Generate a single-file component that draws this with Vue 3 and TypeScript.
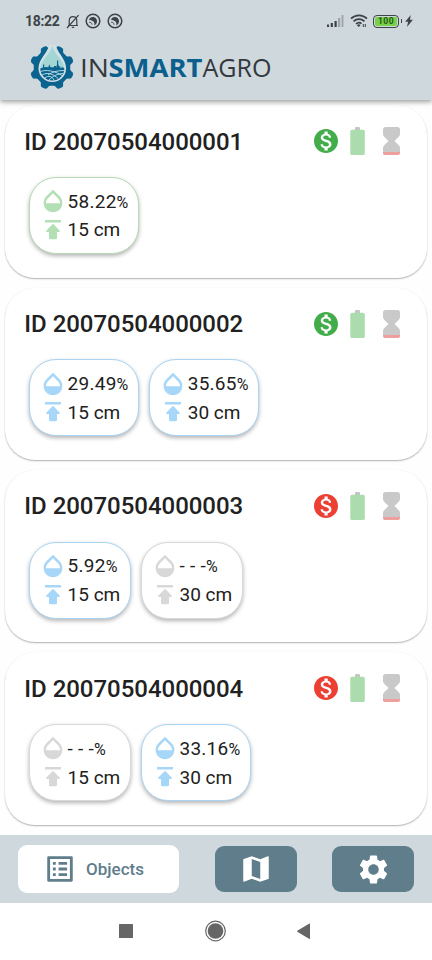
<script setup lang="ts">
type Tone = 'green' | 'blue' | 'grey'

interface Reading {
  moisture: string
  depth: number
  tone: Tone
}

interface Probe {
  id: string
  paid: boolean
  readings: Reading[]
}

const probes: Probe[] = [
  { id: '20070504000001', paid: true, readings: [{ moisture: '58.22', depth: 15, tone: 'green' }] },
  {
    id: '20070504000002',
    paid: true,
    readings: [
      { moisture: '29.49', depth: 15, tone: 'blue' },
      { moisture: '35.65', depth: 30, tone: 'blue' },
    ],
  },
  {
    id: '20070504000003',
    paid: false,
    readings: [
      { moisture: '5.92', depth: 15, tone: 'blue' },
      { moisture: '- - -', depth: 30, tone: 'grey' },
    ],
  },
  {
    id: '20070504000004',
    paid: false,
    readings: [
      { moisture: '- - -', depth: 15, tone: 'grey' },
      { moisture: '33.16', depth: 30, tone: 'blue' },
    ],
  },
]

const teeth = [22.5, 67.5, 112.5, 157.5, 202.5, 247.5, 292.5, 337.5]
</script>

<template>
  <div class="screen">
    <header class="header">
      <div class="status">
        <span class="clock">18:22</span>
        <svg class="bell" viewBox="0 0 14 15">
          <path d="M2 11.5h10M3.2 11.2V7C3.2 4 4.6 2.6 7 2.6S10.8 4 10.8 7v4.2M5.8 13.4h2.4M1 14 12.6 1.2" />
        </svg>
        <svg v-for="n in 2" :key="n" class="badge" viewBox="0 0 16 16">
          <circle cx="8" cy="8" r="6.8" />
          <path class="solid" d="M4 7C4.600 4.300 7.200 3.400 9.400 4.300c2.400 1 3.200 3.600 2.300 5.800-.6 1.200-1.500 1.900-2.600 2.200.7-1.700.3-3.100-1-4.100-1.300-.9-2.700-1.200-4.100-1.200Z" />
          <path class="thin" d="M4.200 9.200c1.500-.1 2.700.8 2.900 2.500" />
        </svg>
        <span class="spacer" />
        <svg class="signal" viewBox="0 0 17 13">
          <path d="M0 9.500h2V12H0zM3.700 8h2.200v4H3.700zM7.500 6h2.200v6H7.500z" />
          <path class="faint" d="M11 3h2.200v9H11zM14.600 0h1.800v12h-1.800z" />
        </svg>
        <svg class="wifi" viewBox="0 0 18 14">
          <path d="M1 4.700C5.500.2 12.500.2 17 4.700M3.500 7.400c3.200-3 7.800-3 11 0M6 9.900c1.800-1.500 4-1.500 5.500-.2" />
          <path class="solid" d="m6.900 11.200 1.900 1.900 1.700-1.900a2.600 2.600 0 0 0-3.600 0ZM12.800 10h1v3h-1zM14.800 10h1v3h-1z" />
        </svg>
        <span class="charge"><span class="charge-level">100</span></span>
        <svg class="bolt" viewBox="0 0 8 12"><path d="M5.800 0 .2 6.800h2.900L2 12l5.900-7.200H4.900z" /></svg>
      </div>
      <div class="brand">
        <svg class="emblem" viewBox="-22 -22.500 44 45">
          <g class="gear">
            <circle r="18.300" />
            <path v-for="a in teeth" :key="a" :transform="`rotate(${a})`" d="M-6-16.500Q-3.800-18.500-3.500-20.800-3-22.300 0-22.300t3.500 1.500Q3.800-18.500 6-16.500Z" />
          </g>
          <path class="halo" d="M-2.800-23.500C-3.500-15-13.500-9-13.500.8a13.800 13.800 0 0 0 27.600 0C14.100-9 4.500-15 3.800-23.500Z" />
          <path class="drop" d="M.3-21.500C-1.500-13-11.300-8-11.700.8a12 12 0 0 0 24 0C11.900-8 2.100-13 .3-21.500Z" />
          <path class="field" d="M-11.700 1q4-2.400 8-1.200l1-3 1.200 3H2V-1.500h2V.5L5.500-5 7-1h1.500v2l2-1.500L12.300 1a12 12 0 0 1-24 0Z" />
          <path class="rows" d="M-11.500 4C-6 2 2 3 10 8M-10 7.500C-5 4.500 1 6 6 11M-7.500 10.500C-3 7.500 0 9 2 12.500M12 3C5 3 0 4.500-4 7.500M11 6C6 6 0 9-3 12.500" />
          <path class="field" d="M-9-3h1.200V2H-9zM5-7h1.200V1H5z" />
        </svg>
        <svg class="wordmark" viewBox="0 0 192 30">
          <text x="-1" y="24" textLength="29" lengthAdjust="spacingAndGlyphs">IN</text>
          <text class="strong" x="27.500" y="24" textLength="94" lengthAdjust="spacingAndGlyphs">SMART</text>
          <text x="121.500" y="24" textLength="69" lengthAdjust="spacingAndGlyphs">AGRO</text>
        </svg>
      </div>
    </header>

    <main class="list">
      <section v-for="probe in probes" :key="probe.id" class="card">
        <div class="card-head">
          <h2>ID {{ probe.id }}</h2>
          <svg class="coin" :class="{ unpaid: !probe.paid }" viewBox="2 2 20 20">
            <path d="M12 2C6.480 2 2 6.480 2 12s4.480 10 10 10 10-4.480 10-10S17.520 2 12 2zm1.410 16.090V20h-2.670v-1.930c-1.710-.36-3.160-1.460-3.270-3.400h1.960c.1 1.050.82 1.870 2.650 1.870 1.960 0 2.400-.98 2.400-1.590 0-.83-.44-1.610-2.670-2.140-2.480-.6-4.180-1.620-4.180-3.670 0-1.720 1.390-2.840 3.110-3.210V4h2.670v1.950c1.860.45 2.790 1.860 2.850 3.390H14.300c-.05-1.110-.64-1.870-2.220-1.870-1.500 0-2.400.68-2.400 1.640 0 .84.65 1.390 2.670 1.910s4.180 1.390 4.180 3.910c-.02 1.830-1.380 2.830-3.120 3.160z" />
          </svg>
          <svg class="battery" viewBox="0 0 15 28">
            <path class="cap" d="M5 3.200V1a1 1 0 0 1 1-1h3a1 1 0 0 1 1 1v2.200z" />
            <rect class="cell" x=".3" y="2.800" width="14.500" height="25.200" rx="1.600" />
          </svg>
          <svg class="hourglass" viewBox="0 0 17 28">
            <path d="M2.500 0h12Q17 0 17 2.500V7q0 1.700-1.200 2.800L11.500 14l4.300 4.200Q17 19.300 17 21v4.500q0 2.500-2.500 2.500h-12Q0 28 0 25.500V21q0-1.700 1.200-2.800L5.500 14 1.200 9.800Q0 8.700 0 7V2.500Q0 0 2.500 0Z" />
            <path class="low" d="M0 25h17v.5q0 2.500-2.500 2.500h-12Q0 28 0 25.500z" />
          </svg>
        </div>
        <div class="readings">
          <div v-for="r in probe.readings" :key="r.depth" class="chip" :class="r.tone">
            <div class="line">
              <svg class="glyph" viewBox="0 0 24 24">
                <path d="M17.660 8 12 2.350 6.340 8C4.780 9.560 4 11.640 4 13.640s.78 4.110 2.340 5.670 3.610 2.350 5.660 2.350 4.100-.79 5.660-2.350S20 15.640 20 13.640 19.220 9.560 17.660 8zM6 14c.01-2 .62-3.270 1.760-4.400L12 5.270l4.240 4.380C17.380 10.770 17.990 12 18 14H6z" />
              </svg>
              <span class="moisture">{{ r.moisture }}<small>%</small></span>
            </div>
            <div class="line">
              <svg class="glyph" viewBox="0 0 28 28">
                <path d="M6 4h16v2.500H6zM14 7.800l6.600 6.700q1 1.400-.6 1.500h-2v6q0 1.300-1.300 1.300h-5.400Q10 23.300 10 22v-6H8q-1.600-.1-.6-1.500z" />
              </svg>
              <span>{{ r.depth }} cm</span>
            </div>
          </div>
        </div>
      </section>
    </main>

    <nav class="tabs">
      <button class="tab active">
        <svg viewBox="0 0 24 24"><path d="M19 5v14H5V5h14m1.100-2H3.900c-.5 0-.9.4-.9.9v16.200c0 .4.4.9.9.9h16.200c.4 0 .9-.5.9-.9V3.900c0-.5-.5-.9-.9-.9zM11 7h6v2h-6V7zm0 4h6v2h-6v-2zm0 4h6v2h-6zM7 7h2v2H7zm0 4h2v2H7zm0 4h2v2H7z" /></svg>
        <span>Objects</span>
      </button>
      <button class="tab map">
        <svg viewBox="0 0 24 24"><path d="M20.500 3l-.16.03L15 5.100 9 3 3.360 4.900c-.21.07-.36.25-.36.48V20.500c0 .28.22.5.5.5l.16-.03L9 18.900l6 2.100 5.640-1.900c.21-.07.36-.25.36-.48V3.500c0-.28-.22-.5-.5-.5zM15 19l-6-2.110V5l6 2.110V19z" /></svg>
      </button>
      <button class="tab settings">
        <svg viewBox="0 0 24 24"><path d="M19.140 12.940c.04-.3.06-.61.06-.94 0-.32-.02-.64-.07-.94l2.030-1.580c.18-.14.23-.41.12-.61l-1.920-3.320c-.12-.22-.37-.29-.59-.22l-2.390.96c-.5-.38-1.030-.7-1.620-.94l-.36-2.540c-.04-.24-.24-.41-.48-.41h-3.840c-.24 0-.43.17-.47.41l-.36 2.540c-.59.24-1.130.57-1.620.94l-2.390-.96c-.22-.08-.47 0-.59.22L2.740 8.870c-.12.21-.08.47.12.61l2.030 1.580c-.05.3-.09.63-.09.94s.02.64.07.94l-2.030 1.580c-.18.14-.23.41-.12.61l1.920 3.320c.12.22.37.29.59.22l2.390-.96c.5.38 1.030.7 1.620.94l.36 2.540c.05.24.24.41.48.41h3.840c.24 0 .44-.17.47-.41l.36-2.540c.59-.24 1.130-.56 1.620-.94l2.390.96c.22.08.47 0 .59-.22l1.920-3.320c.12-.22.07-.47-.12-.61l-2.010-1.580zM12 15.600c-1.980 0-3.600-1.620-3.600-3.600s1.620-3.600 3.600-3.600 3.600 1.620 3.600 3.600-1.620 3.600-3.600 3.600z" /></svg>
      </button>
    </nav>

    <footer class="system">
      <svg viewBox="0 0 22 22"><rect x="4" y="4" width="14" height="14" rx=".6" /></svg>
      <svg viewBox="0 0 22 22"><circle class="ring" cx="11.500" cy="11" r="9.800" /><circle cx="11.500" cy="11" r="7.800" /></svg>
      <svg viewBox="0 0 22 22"><path d="M17 3.800v14.800q0 .6-.6.3L4.300 11.700q-.6-.5 0-.9l12.100-7.300q.6-.3.600.3Z" /></svg>
    </footer>
  </div>
</template>

<style>
body {
  margin: 0;
}
</style>

<style scoped>
.screen {
  display: flex;
  flex-direction: column;
  width: 432px;
  height: 960px;
  overflow: hidden;
  background: #fefefe;
  color: #212121;
  font-family: Roboto, sans-serif;
}
svg {
  display: block;
  flex: none;
}
.header {
  position: relative;
  z-index: 1;
  height: 100px;
  flex: none;
  background: #cfd8dd;
  box-shadow: 0 2px 5px rgba(0, 0, 0, 0.38);
}
.status {
  display: flex;
  align-items: center;
  height: 42px;
  padding: 0 20px 0 25px;
  color: #3d4347;
}
.clock {
  width: 34px;
  margin-right: 7px;
  font-size: 14px;
  font-weight: 700;
  letter-spacing: -0.3px;
  white-space: nowrap;
}
.bell {
  width: 14px;
  height: 15px;
  margin-right: 5px;
  fill: none;
  stroke: currentColor;
  stroke-width: 1.2;
}
.badge {
  width: 16px;
  height: 16px;
  margin-right: 5.800px;
  fill: none;
  stroke: currentColor;
  stroke-width: 1.5;
}
.solid {
  fill: currentColor;
  stroke: none;
}
.thin {
  stroke-width: 1;
}
.spacer {
  flex: 1;
}
.signal {
  width: 17px;
  height: 13px;
  margin-right: 6px;
  fill: currentColor;
}
.faint {
  opacity: 0.35;
}
.wifi {
  width: 18px;
  height: 14px;
  margin-right: 5px;
  fill: none;
  stroke: currentColor;
  stroke-width: 1.7;
}
.charge {
  position: relative;
  box-sizing: border-box;
  width: 26px;
  height: 13px;
  margin-right: 6px;
  padding: 1px;
  border: 1.5px solid currentColor;
  border-radius: 4px;
}
.charge::after {
  content: '';
  position: absolute;
  top: 3px;
  right: -4px;
  width: 1.5px;
  height: 4px;
  background: currentColor;
}
.charge-level {
  display: block;
  height: 9px;
  border-radius: 2px;
  background: #78d149;
  color: #25591a;
  font-size: 8.5px;
  font-weight: 700;
  line-height: 9px;
  letter-spacing: 0.4px;
  text-align: center;
}
.bolt {
  width: 8px;
  height: 12px;
  margin-right: -1px;
  fill: currentColor;
}
.brand {
  display: flex;
  align-items: center;
  padding: 2.500px 0 0 30px;
}
.emblem {
  width: 44px;
  height: 45px;
  overflow: hidden;
}
.gear,
.field {
  fill: #0b6390;
}
.halo {
  fill: #d3e0e5;
}
.drop {
  fill: #a3d5d4;
}
.rows {
  fill: none;
  stroke: #bfe0e2;
  stroke-width: 0.9;
}
.wordmark {
  width: 192px;
  height: 30px;
  margin-left: 7px;
  margin-top: 2px;
  overflow: visible;
  fill: #34393d;
  font-family: 'Open Sans', sans-serif;
  font-size: 25.5px;
}
.wordmark .strong {
  fill: #0b5f8d;
  font-weight: 700;
}
.list {
  display: flex;
  flex: 1;
  flex-direction: column;
  gap: 10px;
  box-sizing: border-box;
  min-height: 0;
  padding: 5.3px 5px 0;
}
.card {
  box-sizing: border-box;
  height: 172.400px;
  flex: none;
  padding: 20px 27.500px 0 19.300px;
  border-radius: 30px;
  background: #fff;
  box-shadow: 0 1px 1.5px rgba(0, 0, 0, 0.3), 0 0 1px rgba(0, 0, 0, 0.04);
}
.card-head {
  display: flex;
  align-items: center;
  height: 32px;
}
h2 {
  margin: 0;
  padding-top: 0.500px;
  flex: 1;
  font-size: 24px;
  font-weight: 500;
  letter-spacing: -0.03px;
  white-space: nowrap;
}
.coin {
  width: 24px;
  height: 24px;
  margin-right: 12px;
  fill: #43ad4b;
}
.coin.unpaid {
  fill: #ec4035;
}
.battery {
  width: 15px;
  height: 28px;
  margin-right: 18px;
}
.cap {
  fill: #c5c5c5;
}
.cell {
  fill: #aadcad;
}
.hourglass {
  width: 17px;
  height: 28px;
  fill: #c9c9c9;
}
.hourglass .low {
  fill: #ee9f9d;
}
.readings {
  display: flex;
  gap: 9.700px;
  padding: 19.800px 0 0 4.500px;
}
.chip {
  box-sizing: border-box;
  height: 77px;
  padding: 8.700px 9.700px 0 9px;
  border: 1.5px solid var(--edge);
  border-radius: 27px;
  background: #fff;
  box-shadow: 0 2px 4px rgba(0, 0, 0, 0.3);
}
.green {
  --edge: #b5dcb7;
  --ink: #b3dfb5;
}
.blue {
  --edge: #a9d4f3;
  --ink: #a6d6f8;
}
.grey {
  --edge: #d8d8d8;
  --ink: #d8d8d8;
}
.line {
  display: flex;
  align-items: center;
  height: 28.800px;
  font-size: 19px;
  white-space: nowrap;
}
.line span {
  margin-left: 0.800px;
}
.glyph {
  width: 28px;
  height: 28px;
  fill: var(--ink);
}
.moisture {
  letter-spacing: 0.250px;
}
.line small {
  font-size: 16px;
}
.tabs {
  display: flex;
  align-items: center;
  height: 68px;
  flex: none;
  box-sizing: border-box;
  padding: 0 18px;
  background: #cfd8dd;
}
.tab {
  display: flex;
  align-items: center;
  justify-content: center;
  width: 82px;
  height: 46px;
  padding: 0;
  border: 0;
  border-radius: 9px;
  background: #607d8b;
  color: #fff;
  font: 500 17px Roboto, sans-serif;
}
.tab svg {
  width: 34px;
  height: 34px;
  fill: currentColor;
}
.tab.active {
  justify-content: flex-start;
  width: 161px;
  height: 48px;
  padding-left: 25px;
  gap: 9px;
  background: #fff;
  color: #607d8b;
}
.map {
  margin: 0 35.500px 0 36px;
}
.settings svg {
  width: 35px;
  height: 35px;
}
.system {
  display: flex;
  justify-content: center;
  gap: 67px;
  height: 57px;
  flex: none;
  box-sizing: border-box;
  padding: 17.300px 2px 0 0;
  background: #fff;
}
.system svg {
  width: 22px;
  height: 22px;
  fill: #666;
}
.system .ring {
  fill: none;
  stroke: #666;
  stroke-width: 1.200;
}
</style>
